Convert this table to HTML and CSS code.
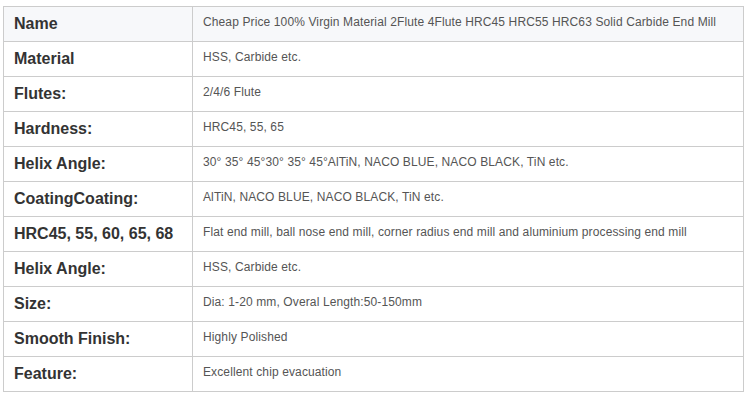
FILE: index.html
```html
<!DOCTYPE html>
<html>
<head>
<meta charset="utf-8">
<link rel="stylesheet" href="styles.css">
</head>
<body>
<table class="spec">
  <tr class="head"><th>Name</th><td>Cheap Price 100% Virgin Material 2Flute 4Flute HRC45 HRC55 HRC63 Solid Carbide End Mill</td></tr>
  <tr><th>Material</th><td>HSS, Carbide etc.</td></tr>
  <tr><th>Flutes:</th><td>2/4/6 Flute</td></tr>
  <tr><th>Hardness:</th><td>HRC45, 55, 65</td></tr>
  <tr><th>Helix Angle:</th><td>30° 35° 45°30° 35° 45°AlTiN, NACO BLUE, NACO BLACK, TiN etc.</td></tr>
  <tr><th>CoatingCoating:</th><td>AlTiN, NACO BLUE, NACO BLACK, TiN etc.</td></tr>
  <tr><th>HRC45, 55, 60, 65, 68</th><td>Flat end mill, ball nose end mill, corner radius end mill and aluminium processing end mill</td></tr>
  <tr><th>Helix Angle:</th><td>HSS, Carbide etc.</td></tr>
  <tr><th>Size:</th><td>Dia: 1-20 mm, Overal Length:50-150mm</td></tr>
  <tr><th>Smooth Finish:</th><td>Highly Polished</td></tr>
  <tr><th>Feature:</th><td>Excellent chip evacuation</td></tr>
</table>
</body>
</html>
```
FILE: styles.css
```css
html, body {
  margin: 0;
  background: #fff;
}
body {
  padding: 6px 0 0 3px;
  font-family: "Liberation Sans", Arial, sans-serif;
}
.spec {
  border-collapse: collapse;
  width: 741px;
  table-layout: fixed;
}
.spec th, .spec td {
  border: 1px solid #cccccc;
  height: 35px;
  box-sizing: border-box;
  padding: 0 10px;
  text-align: left;
  white-space: nowrap;
}
.spec th {
  width: 189px;
  font-size: 16px;
  font-weight: bold;
  color: #333;
  vertical-align: middle;
  padding-bottom: 1px;
}
.spec td {
  font-size: 12px;
  letter-spacing: 0.12px;
  color: #555;
  vertical-align: top;
  padding-top: 8px;
}
.spec tr.head th, .spec tr.head td {
  background: #f7f8fa;
}
```
